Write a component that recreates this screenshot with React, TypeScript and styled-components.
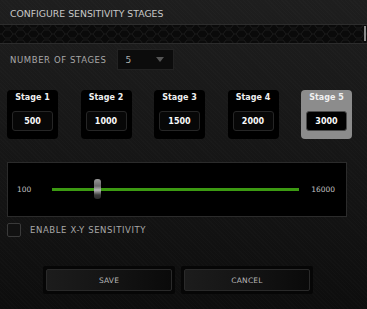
import React, { useState } from 'react';
import styled, { createGlobalStyle } from 'styled-components';

const GlobalStyle = createGlobalStyle`
  html, body {
    margin: 0;
    padding: 0;
    background: #111;
  }
  * {
    box-sizing: border-box;
  }
`;

type Stage = {
  label: string;
  value: number;
};

const stages: Stage[] = [
  { label: 'Stage 1', value: 500 },
  { label: 'Stage 2', value: 1000 },
  { label: 'Stage 3', value: 1500 },
  { label: 'Stage 4', value: 2000 },
  { label: 'Stage 5', value: 3000 },
];

const MIN = 100;
const MAX = 16000;

export default function App() {
  const [active] = useState(4);
  const level = stages[active].value;
  const pct = ((level - MIN) / (MAX - MIN)) * 100;

  return (
    <>
      <GlobalStyle />
      <Root>
        <Title>CONFIGURE SENSITIVITY STAGES</Title>
        <HexBand>
          <svg width="100%" height="100%">
            <defs>
              <pattern id="hex" width="13" height="10" patternUnits="userSpaceOnUse" x="2" y="4">
                <path d="M0 5 L3 1 L8 1 L11 5 L8 9 L3 9 Z M11 5 L13 5" fill="none" stroke="#1a1a1a" strokeWidth="1" />
              </pattern>
            </defs>
            <rect width="100%" height="100%" fill="url(#hex)" />
          </svg>
          <ScrollEdge />
        </HexBand>

        <CountRow>
          <Label>NUMBER OF STAGES</Label>
          <Select>
            <span>5</span>
            <Arrow />
          </Select>
        </CountRow>

        <StageRow>
          {stages.map((s, i) => (
            <StageCard key={s.label} $active={i === active}>
              <StageName>{s.label}</StageName>
              <StageValue $active={i === active}>{s.value}</StageValue>
            </StageCard>
          ))}
        </StageRow>

        <SliderPanel>
          <RangeText>{MIN}</RangeText>
          <Track>
            <Thumb style={{ left: `${pct}%` }} />
          </Track>
          <RangeText>{MAX}</RangeText>
        </SliderPanel>

        <CheckRow>
          <Box />
          <Label>ENABLE X-Y SENSITIVITY</Label>
        </CheckRow>

        <ButtonRow>
          <ButtonFrame>
            <Button>SAVE</Button>
          </ButtonFrame>
          <ButtonFrame>
            <Button>CANCEL</Button>
          </ButtonFrame>
        </ButtonRow>
      </Root>
    </>
  );
}

const Root = styled.div`
  width: 367px;
  height: 309px;
  overflow: hidden;
  display: flex;
  flex-direction: column;
  font-family: 'DejaVu Sans', 'Liberation Sans', sans-serif;
  background:
    repeating-linear-gradient(45deg, rgba(255,255,255,0.012) 0 1px, transparent 1px 3px),
    linear-gradient(180deg, #1e1e1e 0%, #1a1a1a 25%, #161616 50%, #121212 75%, #0d0d0d 100%);
`;

const Title = styled.div`
  height: 24px;
  padding: 8px 0 0 10px;
  color: #c8c8c8;
  font-size: 9.3px;
  white-space: nowrap;
`;

const HexBand = styled.div`
  position: relative;
  height: 20px;
  background: #0a0a0a;
  border-top: 1px solid #2c2c2c;
  border-bottom: 1px solid #2c2c2c;
  svg {
    display: block;
  }
`;

const ScrollEdge = styled.div`
  position: absolute;
  right: 1px;
  top: 1px;
  width: 2px;
  height: 15px;
  background: #8a8a8a;
`;

const CountRow = styled.div`
  display: flex;
  align-items: center;
  gap: 10px;
  margin-top: 5px;
  padding-left: 10px;
`;

const Label = styled.span`
  color: #a8a8a8;
  font-size: 8.5px;
  letter-spacing: 0.6px;
  white-space: nowrap;
`;

const Select = styled.div`
  width: 57px;
  height: 21px;
  background: #0c0c0c;
  border: 1px solid #222;
  display: flex;
  align-items: center;
  justify-content: space-between;
  padding: 0 9px 0 8px;
  color: #b0b0b0;
  font-size: 9px;
`;

const Arrow = styled.span`
  width: 0;
  height: 0;
  border-left: 4px solid transparent;
  border-right: 4px solid transparent;
  border-top: 5px solid #555;
`;

const StageRow = styled.div`
  display: flex;
  gap: 22.5px;
  margin-top: 20px;
  padding-left: 7px;
`;

const StageCard = styled.div<{ $active: boolean }>`
  width: 51px;
  height: 49px;
  border-radius: 4px;
  background: ${p => (p.$active ? '#8c8c8c' : '#000')};
  display: flex;
  flex-direction: column;
  align-items: center;
  padding-top: 3px;
`;

const StageName = styled.div`
  color: #f0f0f0;
  font-size: 8px;
  font-weight: bold;
  height: 18px;
  line-height: 10px;
`;

const StageValue = styled.div<{ $active: boolean }>`
  width: 41px;
  height: 20px;
  border-radius: 3px;
  background: ${p => (p.$active ? '#000' : '#070707')};
  border: 1px solid ${p => (p.$active ? '#4a4a4a' : '#262626')};
  color: #fafafa;
  font-size: 8px;
  font-weight: bold;
  display: flex;
  align-items: center;
  justify-content: center;
`;

const SliderPanel = styled.div`
  margin: 23px 0 0 7px;
  width: 340px;
  height: 55px;
  background: #000;
  border: 1px solid #2b2b2b;
  display: flex;
  align-items: center;
  padding: 0 11px 0 9px;
`;

const RangeText = styled.span`
  color: #c0c0c0;
  font-size: 7.5px;
  width: 34px;
  &:last-child {
    text-align: right;
    width: 36px;
  }
`;

const Track = styled.div`
  position: relative;
  flex: 1;
  height: 3px;
  margin-left: 1px;
  background: #3c9a12;
`;

const Thumb = styled.div`
  position: absolute;
  top: -9px;
  width: 7px;
  height: 20px;
  margin-left: -3px;
  border-radius: 3px;
  background: linear-gradient(180deg, #9a9a9a 0%, #6a6a6a 35%, #b8b8b8 55%, #3a3a3a 80%, #2a2a2a 100%);
`;

const CheckRow = styled.div`
  display: flex;
  align-items: center;
  gap: 9px;
  margin: 6px 0 0 7px;
`;

const Box = styled.div`
  width: 14px;
  height: 14px;
  border: 1px solid #3a3a3a;
  border-radius: 2px;
  background: #111;
`;

const ButtonRow = styled.div`
  display: flex;
  gap: 6px;
  margin: 29px 0 0 43px;
`;

const ButtonFrame = styled.div`
  width: 132px;
  height: 28px;
  padding: 3px;
  background: #060606;
  border-radius: 2px;
`;

const Button = styled.div`
  height: 100%;
  border: 1px solid #2a2a2a;
  border-radius: 2px;
  background: linear-gradient(90deg, #1c1c1c 0%, #141414 50%, #0a0a0a 100%);
  color: #b8b8b8;
  font-size: 7.5px;
  display: flex;
  align-items: center;
  justify-content: center;
  letter-spacing: 0.2px;
`;
